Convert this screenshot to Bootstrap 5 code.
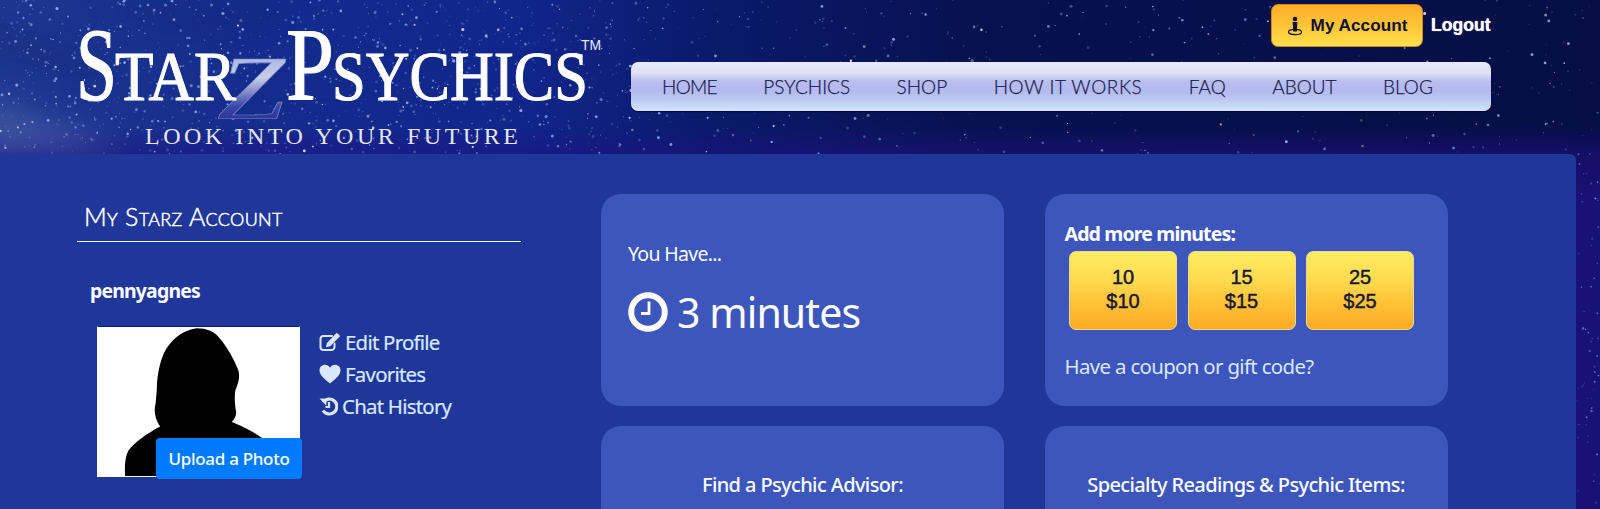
<!DOCTYPE html>
<html lang="en">
<head>
<meta charset="utf-8">
<title>Starz Psychics - My Account</title>
<link rel="stylesheet" href="https://cdn.jsdelivr.net/npm/bootstrap@5.3.0/dist/css/bootstrap.min.css">
<style>
html,body{height:509px;overflow:hidden}
body{position:relative;background:#0a1050;font-family:"Noto Sans",sans-serif;color:#fff;font-size:18px}
.sky{position:absolute;left:0;top:0;width:1600px;height:509px;z-index:0;
 background:linear-gradient(180deg,rgba(30,16,130,0) 0,rgba(30,16,130,0) 125px,rgba(32,16,130,.55) 154px,rgba(26,18,120,.95) 200px,rgba(26,18,120,.95) 509px),
 linear-gradient(90deg,#1e3890 0,#142c8c 260px,#10268a 520px,#0a1a6c 700px,#07114e 1000px,#060e45 1600px)}
.page-top{position:relative;z-index:1;height:154px}
.logo-box{width:631px;flex:none}
.logo-svg{display:block;width:631px;height:154px}
.logo-serif{font-family:"Liberation Serif",serif;fill:#fff;stroke:#fff;stroke-width:1.1}
.logo-tag{font-family:"Liberation Serif",serif;fill:#e4e6f0;font-size:24px}
.logo-tm{font-family:"Liberation Sans",sans-serif;fill:#e8e8f0;font-size:15px}
.top-right{width:860px;flex:none}
.top-strip{padding-top:4px}
.acct-btn{height:43px;width:152px;padding:0;border:1px solid #c98a18;border-radius:7px;background:linear-gradient(180deg,#ffae28 0,#ffc438 50%,#ffe04e 100%);color:#0d1030;font:700 17.2px/1 "Liberation Sans",sans-serif}
.acct-btn:hover{background:#ffc438;color:#0d1030}
.logout-link{font:700 17.6px/1 "Liberation Sans",sans-serif;color:#fff;text-decoration:none;margin-left:8px;width:60px;text-shadow:0 0 1px #fff}
.menu-bar{height:49px;margin-top:15px;padding-left:31px;border-radius:7px;background:linear-gradient(180deg,#e8eafa 0,#dfe2f7 22%,#b9bef0 40%,#b4baef 58%,#bcc6f2 75%,#d3e4fc 100%);gap:46.5px;box-shadow:0 1px 1px #02062e}
.menu-bar a{font:300 19px/49px "Lato",sans-serif;color:#182150;text-decoration:none;-webkit-text-stroke:.25px #182150}
.menu-bar a.tight-item{letter-spacing:-.7px}
.menu-bar a.wide-item{letter-spacing:.6px}
.panel{position:relative;z-index:1;width:1576px;height:355px;background:#1e3799;border-radius:0 6px 0 0;padding:40px 0 0 77px}
.side-col{width:444px;margin-right:80px;flex:none}
.side-title{font:300 25px/1 "Lato",sans-serif;font-variant:small-caps;padding:10px 0 10px 7px;height:48px;border-bottom:1px solid #fff;color:#fff;letter-spacing:.3px;margin:0;-webkit-text-stroke:.5px #fff}
.user-name{font-size:19.4px;font-weight:700;letter-spacing:-.8px;line-height:24px;margin:37px 0 0 13px}
.photo-row{margin:23px 0 0 20px}
.photo-box{position:relative;width:203px;height:151px;background:#fff;border:1px solid #fff;border-top-color:#0a1a80;flex:none}
.photo-box svg{display:block;width:100%;height:100%}
.upload-btn{position:absolute;left:58px;top:111px;width:146px;height:41px;padding:0;background:#007bff;border:0;border-radius:4px;font-size:17px;font-weight:500;letter-spacing:-.3px}
.acct-links{margin-left:19px;padding-top:0}
.acct-links a{display:flex;align-items:center;height:32px;color:#d9e7ff;text-decoration:none;font-size:20.4px;letter-spacing:-.75px;white-space:nowrap;-webkit-text-stroke:.2px #d9e7ff}
.acct-links svg{flex:none;margin-right:4px}
.tile-grid{display:grid;grid-template-columns:403px 403px;column-gap:40.5px;row-gap:20px;grid-auto-rows:212px}
.tile{background:#3c56bc;border:0;border-radius:20px;color:#fff}
.have-label{font-size:19.5px;letter-spacing:-.7px;line-height:24px;margin:48px 0 0 27px}
.have-value{display:flex;align-items:center;margin:22px 0 0 27px;font-size:41px;line-height:48px;letter-spacing:-.9px}
.have-value svg{margin-right:9px}
.add-title{font-size:19.5px;font-weight:700;letter-spacing:-.85px;line-height:24px;margin:28px 0 0 20px}
.buy-row{gap:10.5px;margin:5px 0 0 24.5px}
.buy-btn{width:108px;height:79px;padding:0 0 4px;border:1px solid #f0d890;border-radius:7px;background:linear-gradient(180deg,#ffed62 0,#ffdb50 35%,#ffc63c 60%,#ffab22 100%);color:#16183a;font:400 20px/24px "Liberation Sans",sans-serif;-webkit-text-stroke:.45px #16183a}
.buy-btn:hover{background:#ffc63c;color:#16183a}
.coupon-link{display:block;color:#d9e7ff;text-decoration:none;font-size:20.4px;letter-spacing:-.65px;line-height:24px;margin:24px 0 0 20px}
.tile-head{text-align:center;font-size:20px;font-weight:500;letter-spacing:-.62px;line-height:24px;margin-top:47px}
</style>
</head>
<body>
<svg class="sky" id="sky" viewBox="0 0 1600 509" aria-hidden="true"></svg>

<header class="page-top d-flex">
  <div class="logo-box">
    <svg class="logo-svg" viewBox="0 0 631 154" role="img" aria-label="Starz Psychics">
      <defs>
        <linearGradient id="zfill" x1="0" y1="0" x2="0" y2="1">
          <stop offset="0" stop-color="#8e9fd8"/><stop offset=".4" stop-color="#c8cee8"/><stop offset=".68" stop-color="#3a48a8"/><stop offset="1" stop-color="#161680"/>
        </linearGradient>
      </defs>
      <text x="217" y="119" font-family="Liberation Serif" font-style="italic" font-size="92" fill="url(#zfill)" stroke="#7b86c8" stroke-width=".6" textLength="68" lengthAdjust="spacingAndGlyphs">Z</text>
      <text class="logo-serif" x="76" y="100" font-size="103" textLength="41" lengthAdjust="spacingAndGlyphs">S</text>
      <text class="logo-serif" x="115" y="100" font-size="69" textLength="121" lengthAdjust="spacingAndGlyphs">TAR</text>
      <text class="logo-serif" x="286" y="100" font-size="103" textLength="48" lengthAdjust="spacingAndGlyphs">P</text>
      <text class="logo-serif" x="332" y="100" font-size="69" textLength="256" lengthAdjust="spacingAndGlyphs">SYCHICS</text>
      <text class="logo-tm" x="581" y="50" textLength="20" lengthAdjust="spacingAndGlyphs">TM</text>
      <text class="logo-tag" x="145" y="144" textLength="373">LOOK INTO YOUR FUTURE</text>
    </svg>
  </div>
  <div class="top-right">
    <div class="top-strip d-flex align-items-center justify-content-end">
      <a href="#" class="btn acct-btn d-inline-flex align-items-center justify-content-center gap-2">
        <svg width="16" height="20" viewBox="0 0 16 20" aria-hidden="true"><circle cx="8" cy="3" r="2.3" fill="#0d1030"/><path d="M5.6 6h4.8l-.5 7v2.500H6.100V13z" fill="#0d1030"/><ellipse cx="8" cy="16" rx="6.500" ry="2.600" fill="none" stroke="#0d1030" stroke-width="1.200"/></svg>
        <span>My Account</span>
      </a>
      <a href="#" class="logout-link">Logout</a>
    </div>
    <nav class="menu-bar d-flex">
      <a href="#" class="tight-item">HOME</a><a href="#">PSYCHICS</a><a href="#">SHOP</a><a href="#" class="wide-item">HOW IT WORKS</a><a href="#">FAQ</a><a href="#">ABOUT</a><a href="#">BLOG</a>
    </nav>
  </div>
</header>

<main class="panel d-flex">
  <aside class="side-col">
    <h2 class="side-title">My Starz Account</h2>
    <div class="user-name">pennyagnes</div>
    <div class="photo-row d-flex">
      <div class="photo-box">
        <svg viewBox="0 0 608 452" aria-hidden="true" preserveAspectRatio="none"><path d="M298 4C330 4 352 14 368 34C392 62 412 100 424 130C430 146 426 170 416 190C412 210 414 240 418 258C418 272 410 282 405 288C430 298 470 316 500 340C520 356 530 400 530 452H82C80 420 82 395 92 375C110 350 150 322 188 302C176 285 170 265 172 245C176 225 176 205 178 190C178 150 186 110 200 78C216 46 250 10 298 4Z" fill="#000"/></svg>
        <button type="button" class="btn btn-primary upload-btn">Upload a Photo</button>
      </div>
      <div class="acct-links">
        <a href="#"><svg width="22" height="20" viewBox="0 0 22 20" aria-hidden="true"><path d="M15.500 11.500V15a3 3 0 0 1-3 3H4.500a3 3 0 0 1-3-3V7a3 3 0 0 1 3-3H13" fill="none" stroke="#d9e7ff" stroke-width="2" stroke-linecap="round"/><path d="M17.700 .8l3.500 3.200-10 10.200-4.300 1 1-4.300z" fill="#d9e7ff"/></svg><span>Edit Profile</span></a>
        <a href="#"><svg width="22" height="20" viewBox="0 0 22 20" aria-hidden="true"><path d="M11 19.500C7 16 .5 11.500 .5 6.500 .5 3 3 .8 6 .8c2 0 4 1 5 3 1-2 3-3 5-3 3 0 5.500 2.200 5.500 5.700 0 5-6.500 9.500-10.500 13z" fill="#d9e7ff"/></svg><span>Favorites</span></a>
        <a href="#"><svg width="19" height="20" viewBox="0 0 19 20" aria-hidden="true"><path d="M4.200 6.200A7.500 7.500 0 1 1 4 14.500" fill="none" stroke="#d9e7ff" stroke-width="3.200"/><path d="M.5 2.500l7 .2-.2 6.800z" fill="#d9e7ff"/><path d="M10 6v5H6.500" fill="none" stroke="#d9e7ff" stroke-width="2.200"/></svg><span>Chat History</span></a>
      </div>
    </div>
  </aside>

  <section class="tile-grid">
    <div class="tile card">
      <div class="have-label">You Have...</div>
      <div class="have-value">
        <svg width="40" height="40" viewBox="0 0 40 40" aria-hidden="true"><circle cx="20" cy="20" r="16.800" fill="none" stroke="#fff" stroke-width="6"/><path d="M21 9.500V21.500H13" fill="none" stroke="#fff" stroke-width="2.800"/></svg>
        <span>3 minutes</span>
      </div>
    </div>
    <div class="tile card">
      <div class="add-title">Add more minutes:</div>
      <div class="buy-row d-flex">
        <button type="button" class="btn buy-btn">10<br>$10</button>
        <button type="button" class="btn buy-btn">15<br>$15</button>
        <button type="button" class="btn buy-btn">25<br>$25</button>
      </div>
      <a href="#" class="coupon-link">Have a coupon or gift code?</a>
    </div>
    <div class="tile card"><div class="tile-head">Find a Psychic Advisor:</div></div>
    <div class="tile card"><div class="tile-head">Specialty Readings &amp; Psychic Items:</div></div>
  </section>
</main>

<script src="https://cdn.jsdelivr.net/npm/bootstrap@5.3.0/dist/js/bootstrap.bundle.min.js"></script>
<script>
(function(){
  var s=document.getElementById('sky'),seed=1234567,h='';
  function r(){seed=(seed*16807)%2147483647;return seed/2147483647;}
  h+='<defs><filter id="bl"><feGaussianBlur stdDeviation="14"/></filter></defs>';
  h+='<g filter="url(#bl)" opacity=".3"><path d="M-20 95L130 150L-20 160Z" fill="#7f8fc0"/><path d="M-20 20L110 60L100 80L-20 50Z" fill="#0d1f68"/><path d="M80 0L300 0L220 40Z" fill="#0e2272"/></g>';
  for(var i=0;i<2800;i++){
    var x=r()*1600,y=r()*154,d=r();
    var keep=x<620?1:(x<900?.45:.25);
    if(r()>keep)continue;
    var a=r(),op=.2+a*a*.7,rad=.5+d*d*1.1;
    var col=r()<.8?'#9dbcff':'#ffffff';
    h+='<circle cx="'+x.toFixed(1)+'" cy="'+y.toFixed(1)+'" r="'+rad.toFixed(2)+'" fill="'+col+'" opacity="'+op.toFixed(2)+'"/>';
  }
  for(var j=0;j<60;j++){
    h+='<circle cx="'+(1577+r()*23).toFixed(1)+'" cy="'+(154+r()*355).toFixed(1)+'" r="'+(.4+r()*.8).toFixed(2)+'" fill="#8fa8f0" opacity="'+(.2+r()*.5).toFixed(2)+'"/>';
  }
  s.innerHTML=h;
})();
</script>
</body>
</html>
